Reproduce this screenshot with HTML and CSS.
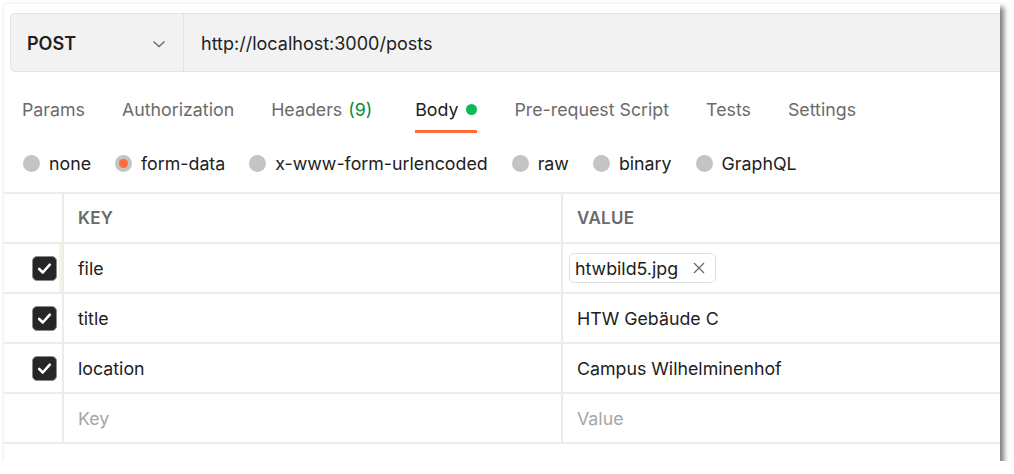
FILE: index.html
```html
<!DOCTYPE html>
<html>
<head>
<meta charset="utf-8">
<link rel="stylesheet" href="styles.css">
</head>
<body>
<div class="panel">
  <div class="urlbar">
    <div class="method">
      <span class="method-name">POST</span>
      <svg class="chev" width="14" height="8" viewBox="0 0 14 8"><path d="M1.5 1.5 L7 6.5 L12.5 1.5" fill="none" stroke="#6b6b6b" stroke-width="1.4"/></svg>
    </div>
    <div class="url">http://localhost:3000/posts</div>
  </div>

  <div class="tabs">
    <div class="tab">Params</div>
    <div class="tab">Authorization</div>
    <div class="tab wide">Headers <span class="count">(9)</span></div>
    <div class="tab active">Body <span class="dot"></span></div>
    <div class="tab">Pre-request Script</div>
    <div class="tab">Tests</div>
    <div class="tab">Settings</div>
  </div>

  <div class="radios">
    <div class="radio"><span class="circle"></span>none</div>
    <div class="radio"><span class="circle on"></span>form-data</div>
    <div class="radio"><span class="circle"></span>x-www-form-urlencoded</div>
    <div class="radio"><span class="circle"></span>raw</div>
    <div class="radio"><span class="circle"></span>binary</div>
    <div class="radio"><span class="circle"></span>GraphQL</div>
  </div>

  <div class="table">
    <div class="row head">
      <div class="c1"></div>
      <div class="c2">KEY</div>
      <div class="c3">VALUE</div>
    </div>
    <div class="row">
      <div class="c1 hl"><span class="cb"><svg width="15" height="13" viewBox="0 0 15 13"><path d="M2.2 7 L5.8 10.5 L12.8 2.6" fill="none" stroke="#fff" stroke-width="2.6" stroke-linecap="round" stroke-linejoin="round"/></svg></span></div>
      <div class="c2">file</div>
      <div class="c3"><span class="chip">htwbild5.jpg<svg class="x" width="12" height="12" viewBox="0 0 12 12"><path d="M1 1 L11 11 M11 1 L1 11" stroke="#6b6b6b" stroke-width="1.3"/></svg></span></div>
    </div>
    <div class="row">
      <div class="c1"><span class="cb"><svg width="15" height="13" viewBox="0 0 15 13"><path d="M2.2 7 L5.8 10.5 L12.8 2.6" fill="none" stroke="#fff" stroke-width="2.6" stroke-linecap="round" stroke-linejoin="round"/></svg></span></div>
      <div class="c2">title</div>
      <div class="c3">HTW Gebäude C</div>
    </div>
    <div class="row">
      <div class="c1"><span class="cb"><svg width="15" height="13" viewBox="0 0 15 13"><path d="M2.2 7 L5.8 10.5 L12.8 2.6" fill="none" stroke="#fff" stroke-width="2.6" stroke-linecap="round" stroke-linejoin="round"/></svg></span></div>
      <div class="c2">location</div>
      <div class="c3">Campus Wilhelminenhof</div>
    </div>
    <div class="row">
      <div class="c1"></div>
      <div class="c2 ph">Key</div>
      <div class="c3 ph">Value</div>
    </div>
  </div>
</div>
</body>
</html>
```

FILE: styles.css
```css
html, body {
  margin: 0;
  padding: 0;
  background: #ffffff;
}
body {
  font-family: Inter, "Noto Sans", sans-serif;
  color: #212121;
}
.panel {
  margin: 3px 0 0 3px;
  width: 997px;
  height: 458px;
  background: #fff;
  box-shadow: 4px 4px 5px rgba(0,0,0,0.5);
  border-top: 1px solid #f2f2f2;
  border-left: 1px solid #f2f2f2;
  box-sizing: border-box;
  padding-top: 9px;
  overflow: hidden;
}
.urlbar {
  margin-left: 6px;
  height: 59px;
  display: flex;
  background: #f2f2f2;
  border: 1px solid #e4e4e4;
  border-right: none;
  border-radius: 5px 0 0 5px;
  box-sizing: border-box;
  padding-top: 2px;
}
.method {
  width: 173px;
  flex: none;
  display: flex;
  align-items: center;
  box-sizing: border-box;
  padding-left: 16px;
  padding-right: 17px;
  border-right: 1px solid #e1e1e1;
  margin-top: -2px;
  padding-top: 2px;
}
.method-name {
  font-weight: 600;
  font-size: 18px;
  color: #212121;
  flex: 1;
}
.chev { display: block; }
.url {
  display: flex;
  align-items: center;
  padding-left: 17px;
  font-size: 18px;
  color: #212121;
}
.tabs {
  display: flex;
  gap: 37px;
  padding-left: 18px;
  height: 61px;
}
.tab {
  display: flex;
  align-items: center;
  font-size: 17.8px;
  color: #6b6b6b;
  border-bottom: 3px solid transparent;
  box-sizing: border-box;
  padding-top: 16px;
}
.tab.wide { margin-right: 6px; }
.tab .count { color: #0a8a3e; margin-left: 6px; }
.tab.active {
  color: #212121;
  border-bottom-color: #ff6c37;
}
.dot {
  width: 11px;
  height: 11px;
  border-radius: 50%;
  background: #0cbb52;
  margin-left: 8px;
}
.radios {
  display: flex;
  gap: 24px;
  padding-left: 19px;
  height: 59px;
  align-items: center;
  padding-top: 1px;
  box-sizing: border-box;
}
.radio {
  display: flex;
  align-items: center;
  font-size: 17.8px;
  color: #212121;
}
.circle {
  width: 17px;
  height: 17px;
  border-radius: 50%;
  background: #c4c4c4;
  margin-right: 9px;
  display: flex;
  align-items: center;
  justify-content: center;
}
.circle.on::after {
  content: "";
  width: 9px;
  height: 9px;
  border-radius: 50%;
  background: #ff6c37;
}
.table {
  border-top: 2px solid #ececec;
}
.row {
  display: grid;
  grid-template-columns: 60px 497px 1fr;
  height: 50px;
  border-bottom: 2px solid #ececec;
  box-sizing: border-box;
}
.row > div {
  display: flex;
  align-items: center;
  font-size: 17.8px;
  color: #212121;
}
.c1 {
  border-right: 2px solid #ececec;
  justify-content: flex-start;
  padding-left: 28px;
}
.c1.hl { box-shadow: inset -3px 0 0 #fcf3da; }
.c2 { padding-left: 14px; }
.c3 { padding-left: 14px; border-left: 2px solid #ececec; }
.row.head > div {
  font-size: 17px;
  font-weight: 600;
  color: #6b6b6b;
  letter-spacing: 0.3px;
}
.cb {
  width: 25px;
  height: 25px;
  flex: none;
  border-radius: 5px;
  background: #262626;
  border: 1px solid #8a8a8a;
  box-sizing: border-box;
  display: flex;
  align-items: center;
  justify-content: center;
}
.cb svg { display: block; }
.row > .c3 .chip {
  display: inline-flex;
  align-items: center;
  border: 1px solid #dedede;
  border-radius: 5px;
  height: 30px;
  padding: 0 10px 0 5px;
  margin-left: -8px;
  box-sizing: border-box;
}
.x { margin-left: 15px; display: block; }
.row > .ph { color: #a6a6a6; }
```
